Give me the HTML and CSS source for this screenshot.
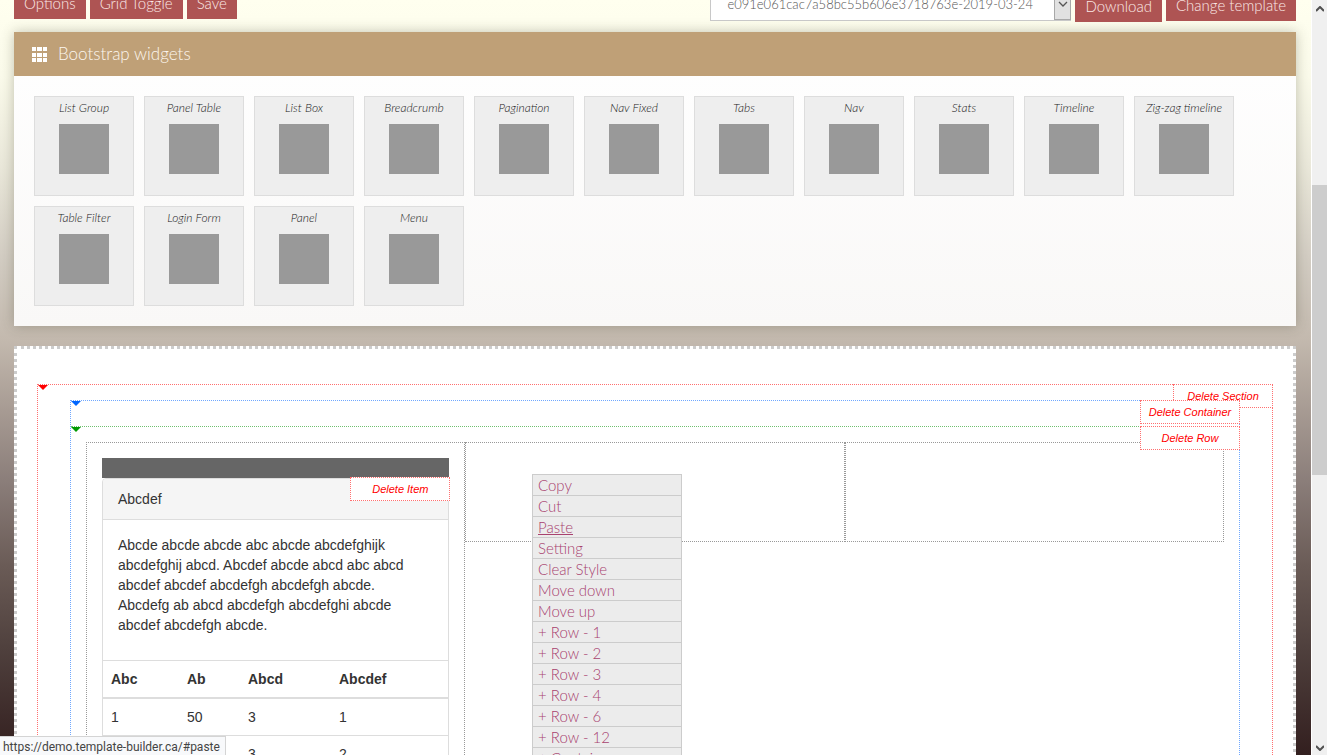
FILE: index.html
```html
<!DOCTYPE html>
<html lang="en">
<head>
<meta charset="utf-8">
<title>Template builder</title>
<link rel="stylesheet" href="styles.css">
</head>
<body>
<div class="window">
  <main class="page">
    <div class="toolbar">
      <button class="btn" type="button">Options</button>
      <button class="btn" type="button">Grid Toggle</button>
      <button class="btn" type="button">Save</button>
      <div class="picker">
        <select class="picker-select" aria-label="Saved template">
          <option>e091e061cac7a58bc55b606e3718763e-2019-03-24</option>
        </select>
        <span class="picker-arrow"><svg width="10" height="6" viewBox="0 0 10 6"><path d="M1 1l4 4 4-4" fill="none" stroke="#555" stroke-width="1.3"/></svg></span>
      </div>
      <button class="btn btn-tall" type="button">Download</button>
      <button class="btn btn-mid" type="button">Change template</button>
    </div>

    <section class="widgets">
      <h2 class="widgets-head">
        <svg width="15" height="15" viewBox="0 0 15 15" fill="#fff"><path d="M0 0h4v4H0zM5 0h5v4H5zM11 0h4v4h-4zM0 6h4v4H0zM5 6h5v4H5zM11 6h4v4h-4zM0 11h4v4H0zM5 11h5v4H5zM11 11h4v4h-4z"/></svg>
        Bootstrap widgets
      </h2>
      <div class="widgets-body">
        <div class="tile">List Group</div>
        <div class="tile">Panel Table</div>
        <div class="tile">List Box</div>
        <div class="tile">Breadcrumb</div>
        <div class="tile">Pagination</div>
        <div class="tile">Nav Fixed</div>
        <div class="tile">Tabs</div>
        <div class="tile">Nav</div>
        <div class="tile">Stats</div>
        <div class="tile">Timeline</div>
        <div class="tile">Zig-zag timeline</div>
        <div class="tile">Table Filter</div>
        <div class="tile">Login Form</div>
        <div class="tile">Panel</div>
        <div class="tile">Menu</div>
      </div>
    </section>

    <section class="canvas">
      <div class="block section">
        <a class="delete" href="#delete-section">Delete Section</a>
        <div class="block container">
          <a class="delete" href="#delete-container">Delete Container</a>
          <div class="block row">
            <a class="delete" href="#delete-row">Delete Row</a>
            <div class="cell">
              <div class="item">
                <div class="item-bar"></div>
                <article class="panel">
                  <a class="delete" href="#delete-item">Delete Item</a>
                  <div class="panel-heading">Abcdef</div>
                  <p class="panel-body">Abcde abcde abcde abc abcde abcdefghijk abcdefghij abcd. Abcdef abcde abcd abc abcd abcdef abcdef abcdefgh abcdefgh abcde. Abcdefg ab abcd abcdefgh abcdefghi abcde abcdef abcdefgh abcde.</p>
                  <table class="table">
                    <thead><tr><th class="col-a">Abc</th><th class="col-b">Ab</th><th class="col-c">Abcd</th><th>Abcdef</th></tr></thead>
                    <tbody>
                      <tr><td>1</td><td>50</td><td>3</td><td>1</td></tr>
                      <tr><td></td><td></td><td>3</td><td>2</td></tr>
                    </tbody>
                  </table>
                </article>
              </div>
            </div>
            <div class="cell"></div>
            <div class="cell"></div>
          </div>
        </div>
      </div>
    </section>
  </main>

  <div class="scrollbar">
    <svg class="scroll-arrow" width="8" height="6" viewBox="0 0 8 6"><path d="M0 5l4-4 4 4" fill="none" stroke="#505050" stroke-width="2"/></svg>
    <div class="scroll-thumb"></div>
    <svg class="scroll-arrow scroll-end" width="8" height="6" viewBox="0 0 8 6"><path d="M0 1l4 4 4-4" fill="none" stroke="#505050" stroke-width="2"/></svg>
  </div>

  <nav class="menu">
    <a href="#copy">Copy</a>
    <a href="#cut">Cut</a>
    <a class="hovered" href="#paste">Paste</a>
    <a href="#setting">Setting</a>
    <a href="#clear">Clear Style</a>
    <a href="#down">Move down</a>
    <a href="#up">Move up</a>
    <a href="#row-1">+ Row - 1</a>
    <a href="#row-2">+ Row - 2</a>
    <a href="#row-3">+ Row - 3</a>
    <a href="#row-4">+ Row - 4</a>
    <a href="#row-6">+ Row - 6</a>
    <a href="#row-12">+ Row - 12</a>
    <a href="#container">+ Container</a>
  </nav>
  <div class="status">https://demo.template-builder.ca/#paste</div>
</div>
</body>
</html>
```
FILE: styles.css
```css
* { box-sizing: border-box; }
body { margin: 0; font: 300 15px/20px Lato, sans-serif; color: #333; }
.window { position: relative; display: flex; height: 100vh; overflow: hidden; }
.page {
  flex: 1; min-width: 0; padding: 0 15px 0 14px; overflow: hidden;
  background: linear-gradient(#ffffef 0%, #fbfbeb 10%, #eae8da 22%, #d3cdc3 34%, #c3b9ae 45%, #a89c94 54%, #8a7d79 64%, #6a5b56 75%, #4f403d 86%, #331f1f 100%);
}

.toolbar { display: flex; align-items: flex-start; gap: 4px; margin: -13px 0 10px; }
.btn { height: 32px; padding: 0 10px; border: 0; background: #ae5453; color: #fbe9e6; font: 300 15px/20px Lato, sans-serif; white-space: nowrap; }
.btn-mid { height: 34px; padding-top: 2px; }
.btn-tall { height: 35px; padding-top: 2px; }
.picker { position: relative; width: 361px; margin-left: auto; }
.picker-select { display: block; width: 100%; height: 34px; padding: 0 18px 0 16px; appearance: none; border: 1px solid #c8c8c8; border-radius: 0; background: #fff; color: #555; font: 300 13px/20px Lato, sans-serif; }
.picker-arrow { position: absolute; top: 1px; right: 0; bottom: 1px; width: 17px; display: flex; align-items: center; justify-content: center; border: 1px solid #a8a8a8; background: #e1e1e1; pointer-events: none; }

.widgets { box-shadow: 0 0 12px rgba(60, 60, 40, .3); background: linear-gradient(#fff, #f9f8f7); }
.widgets-head { display: flex; align-items: center; gap: 11px; height: 44px; margin: 0; padding: 0 18px; background: #bfa077; color: #fcf6ee; font-size: 17px; font-weight: 300; }
.widgets-body { display: flex; flex-wrap: wrap; gap: 10px; padding: 20px; }
.tile { width: 100px; height: 100px; padding-top: 1px; border: 1px solid #ddd; background: #eee; color: #222; font-size: 12px; font-style: italic; text-align: center; white-space: nowrap; }
.tile::after { content: ""; display: block; width: 50px; height: 50px; margin: 6px auto 0; background: #999; }

.canvas { margin-top: 20px; padding: 35px 20px; border: 3px dotted #ccc; background: #fff; font: 14px/20px "Liberation Sans", Arial, sans-serif; }
.block { position: relative; border: 1px dotted; }
.block::before { content: ""; position: absolute; top: 0; left: 0; border: 5px solid transparent; border-bottom: 0; border-top-color: var(--mark); }
.section { --mark: #f00; padding: 15px 32px; border-color: #ff7070; }
.container { --mark: #06f; padding: 25px 0; border-color: #70a8ff; }
.row { --mark: #090; display: grid; grid-template-columns: repeat(3, 1fr); align-items: start; padding: 15px; border-width: 1px 0; border-color: #70c070; }
.cell { min-width: 0; min-height: 100px; padding: 15px; border: 1px dotted #999; }
.item-bar { height: 20px; background: #666; }
.delete { position: absolute; z-index: 1; top: -1px; right: -1px; width: 100px; height: 24px; border: 1px dotted #ff7070; background: #fff; color: #f00; font-size: 11px; font-style: italic; line-height: 22px; text-align: center; text-decoration: none; }
.panel .delete { top: -2px; right: -2px; }
.panel { position: relative; border: 1px solid #ddd; border-radius: 4px; }
.panel-heading { padding: 10px 15px; border-bottom: 1px solid #ddd; border-radius: 3px 3px 0 0; background: #f5f5f5; }
.panel-body { margin: 0; padding: 15px 30px 25px 15px; }
.table { width: 100%; border-collapse: separate; border-spacing: 0; table-layout: fixed; }
.table th, .table td { padding: 8px; border-top: 1px solid #ddd; text-align: left; }
.table th { border-bottom: 1px solid #ddd; }
.col-a { width: 76px; }
.col-b { width: 61px; }
.col-c { width: 91px; }

.scrollbar { display: grid; grid-template-rows: 185fr 290fr 280fr; width: 16px; border-left: 1px solid #fff; background: #f0f0f0; }
.scroll-arrow { margin: 6px 4px; }
.scroll-end { align-self: end; margin-bottom: 4px; }
.scroll-thumb { background: #cdcdcd; }

.menu { position: absolute; z-index: 2; top: 474px; left: 532px; width: 150px; border: 1px solid #ccc; background: #ececec; }
.menu a { display: block; padding: 0 5px; border-bottom: 1px solid #ccc; color: #a8426f; text-decoration: none; }
.menu .hovered { text-decoration: underline; }
.status { position: absolute; z-index: 3; bottom: 0; left: 0; min-width: 226px; height: 19px; padding: 0 4px 0 3px; border: solid #d4d4d4; border-width: 1px 1px 0 0; background: #f8f9fb; color: #444; font: 12px/20px Roboto, sans-serif; }
```
